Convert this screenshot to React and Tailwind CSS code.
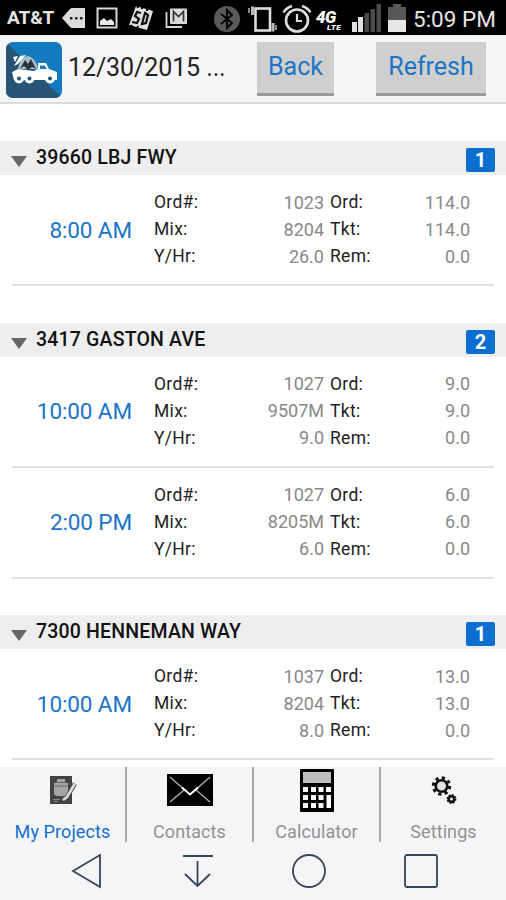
import React from 'react';

const projects = [
  {
    name: '39660 LBJ FWY',
    orders: [
      { time: '8:00 AM', order: '1023', mix: '8204', rate: '26.0', ordered: '114.0', ticketed: '114.0', remaining: '0.0' },
    ],
  },
  {
    name: '3417 GASTON AVE',
    orders: [
      { time: '10:00 AM', order: '1027', mix: '9507M', rate: '9.0', ordered: '9.0', ticketed: '9.0', remaining: '0.0' },
      { time: '2:00 PM', order: '1027', mix: '8205M', rate: '6.0', ordered: '6.0', ticketed: '6.0', remaining: '0.0' },
    ],
  },
  {
    name: '7300 HENNEMAN WAY',
    orders: [
      { time: '10:00 AM', order: '1037', mix: '8204', rate: '8.0', ordered: '13.0', ticketed: '13.0', remaining: '0.0' },
    ],
  },
];

const StatusBar = () => (
  <div className="flex h-[35px] shrink-0 items-center bg-black text-[#e4e4e4]">
    <span className="ml-[7px] mt-[2px] w-[47px] whitespace-nowrap text-[19px] font-bold tracking-[-0.1px]">AT&amp;T</span>
    <svg className="ml-[7px] shrink-0" width="25" height="22" viewBox="0 0 25 22">
      <path d="M1 11 9 2Q10 1 11 1H24V21H11Q10 21 9 20Z" fill="#dcdcdc" />
      <path d="M9 10h2.500v2.500H9zM14 10h2.500v2.500h-2.500zM19 10h2.500v2.500h-2.500z" fill="#222" />
    </svg>
    <svg className="ml-[10px] shrink-0" width="22" height="22" viewBox="0 0 22 22">
      <rect x="1.500" y="1.500" width="19" height="19" fill="none" stroke="#d8d8d8" strokeWidth="2" />
      <path d="M4 18v-4l4-3 3 3 4-2 3 3v3Z" fill="#e8e8e8" />
    </svg>
    <svg className="ml-[10px] shrink-0" width="26" height="26" viewBox="0 0 26 26">
      <path d="M8 1 25 6 19 25 1 20Z" fill="#e0e0e0" />
      <path d="M13 8 9 7 7 11 11 14 9 18 4 17" fill="none" stroke="#111" strokeWidth="2.200" />
      <path d="M17 8 20 10 18 18 14 19Z" fill="none" stroke="#111" strokeWidth="2.200" />
      <path d="M9 0 10 3M14 1 14 4M19 3 19 6M3 20 5 23M10 21 9 24" stroke="#000" strokeWidth="2" />
    </svg>
    <svg className="ml-[11px] shrink-0" width="23" height="22" viewBox="0 0 23 22">
      <path d="M1.500 5V20H17" fill="none" stroke="#d8d8d8" strokeWidth="1.800" />
      <rect x="5" y="1.500" width="17" height="15.500" rx="1" fill="#dcdcdc" />
      <path d="M8.500 14.500V4.500L13.500 9.500 18.500 4.500V14.500" fill="none" stroke="#333" strokeWidth="1.700" />
    </svg>
    <svg className="ml-[25px] mt-[2px] shrink-0" width="28" height="28" viewBox="0 0 28 28">
      <circle cx="14" cy="14" r="13" fill="#5a5a5a" />
      <path d="M8 9 19 18 14 23V5L19 10 8 19" fill="none" stroke="#050505" strokeWidth="2" />
    </svg>
    <svg className="ml-[6px] mt-[2px] shrink-0" width="32" height="28" viewBox="0 0 32 28">
      <rect x="8.500" y="3.500" width="14.500" height="22" fill="none" stroke="#ddd" strokeWidth="2.600" />
      <path d="M5.500 1.500V10M26 18V26.500" stroke="#bbb" strokeWidth="3" />
      <path d="M2 3V8M29 20V25" stroke="#8a8a8a" strokeWidth="2" />
    </svg>
    <svg className="ml-[3px] shrink-0" width="30" height="30" viewBox="0 0 30 30">
      <circle cx="15" cy="17.500" r="11" fill="none" stroke="#ddd" strokeWidth="2.600" />
      <path d="M1.500 9.500Q4 5 10 3M20 3Q26 5 28.500 9.500" fill="none" stroke="#ddd" strokeWidth="2.400" />
      <path d="M15 11V18H20" fill="none" stroke="#ddd" strokeWidth="2.200" />
    </svg>
    <div className="ml-[4px] mt-[8px] flex w-[28px] shrink-0 flex-col italic text-white">
      <span className="text-[17px] font-black leading-[13px] tracking-[-0.5px]">4G</span>
      <span className="ml-[11px] text-[8px] font-black leading-[8px] tracking-[0.5px]">LTE</span>
    </div>
    <svg className="ml-[8px] shrink-0" width="30" height="28" viewBox="0 0 30 28">
      <path d="M0 18h5v10H0zM6 13h5v15H6z" fill="#e0e0e0" />
      <path d="M12.500 9h4.500v19h-4.500zM18.500 5h4.500v23h-4.500zM24.500 0h4.500v28h-4.500z" fill="#4a4a4a" />
    </svg>
    <svg className="ml-[6px] shrink-0" width="18" height="28" viewBox="0 0 18 28">
      <path d="M0 3h5V0h8V3h5V16H0Z" fill="#585858" />
      <path d="M0 16h18v12H0Z" fill="#e6e6e6" />
    </svg>
    <span className="ml-[7px] mt-[4px] whitespace-nowrap text-[22.500px]">5:09 PM</span>
  </div>
);

const AppIcon = () => (
  <svg className="shrink-0" width="56" height="56" viewBox="0 0 56 56">
    <defs>
      <clipPath id="tile">
        <rect width="56" height="56" rx="7" />
      </clipPath>
    </defs>
    <g clipPath="url(#tile)">
      <rect width="56" height="56" fill="#1579bd" />
      <path d="M0 0 56 56H0Z" fill="#275475" />
      <path d="M12 27Q14 15 22 14Q30 16 32 27Z" fill="#a9bfcc" />
      <path d="M14 27 19 18 22 22 25 17 30 27 26 25 22 28 18 24Z" fill="#27323a" />
      <path d="M7 15 12 14 9 20ZM14 14 20 13 12 22 8 24Z" fill="#fff" />
      <path d="M6 30 12 27 28 29 32 27V21H40L43 27 51 30V38H8Z" fill="#fff" />
      <path d="M34 23.500H38.500L41 27H34Z" fill="#1579bd" />
      <g fill="#fff">
        <circle cx="13" cy="36.500" r="5" />
        <circle cx="23.500" cy="36.500" r="5" />
        <circle cx="44" cy="36.500" r="5" />
      </g>
      <g fill="#275475">
        <circle cx="13" cy="36.500" r="2" />
        <circle cx="23.500" cy="36.500" r="2" />
        <circle cx="44" cy="36.500" r="2" />
      </g>
    </g>
  </svg>
);

const Header = () => (
  <header className="flex h-[69px] shrink-0 items-start border-b-2 border-[#dcdcdc] bg-[#f5f5f7] pl-[6px] pt-[7px]">
    <AppIcon />
    <h1 className="ml-[6px] w-[189px] whitespace-nowrap pt-[9px] text-[25px] leading-[34px] tracking-[-0.1px] text-[#222]">12/30/2015 ...</h1>
    <button className="h-[54px] w-[77px] border-b-[3px] border-[#999] bg-[#cfcfcf] pb-[1px] text-[25px] text-[#1b75c4]">Back</button>
    <button className="ml-[42px] h-[54px] w-[110px] border-b-[3px] border-[#999] bg-[#cfcfcf] pb-[1px] text-[25px] text-[#1b75c4]">Refresh</button>
  </header>
);

const OrderRow = ({ order }) => (
  <div className="mx-[12px] flex h-[111px] items-center border-b-2 border-[#e0e3e5] pb-[1px]">
    <div className="w-[120px] pt-[3px] text-right text-[22.500px] tracking-[-0.1px] text-[#1b74c8]">{order.time}</div>
    <div className="ml-[22px] w-[76px] pt-[1px] text-[17.500px] leading-[27px] tracking-[0.3px] text-[#222]">
      <div>Ord#:</div>
      <div>Mix:</div>
      <div>Y/Hr:</div>
    </div>
    <div className="w-[94px] text-right text-[18px] leading-[27px] text-[#888]">
      <div>{order.order}</div>
      <div>{order.mix}</div>
      <div>{order.rate}</div>
    </div>
    <div className="ml-[6px] w-[60px] pt-[1px] text-[17.500px] leading-[27px] tracking-[0.3px] text-[#222]">
      <div>Ord:</div>
      <div>Tkt:</div>
      <div>Rem:</div>
    </div>
    <div className="w-[80px] text-right text-[18px] leading-[27px] text-[#888]">
      <div>{order.ordered}</div>
      <div>{order.ticketed}</div>
      <div>{order.remaining}</div>
    </div>
  </div>
);

const ProjectSection = ({ project }) => (
  <section>
    <div className="flex h-[34px] items-center bg-[#eee] pl-[11px] pr-[11px]">
      <svg className="mt-[7px]" width="16" height="11" viewBox="0 0 16 11">
        <path d="M0 0H16L8 11Z" fill="#666" />
      </svg>
      <h2 className="ml-[9px] flex-1 text-[19.500px] font-medium leading-[32px] tracking-[0.180px] text-[#111]">{project.name}</h2>
      <span className="mt-[4px] flex h-[24px] w-[29px] items-center justify-center rounded-[2px] bg-[#0b6fd0] text-[20px] font-bold text-white">
        {project.orders.length}
      </span>
    </div>
    {project.orders.map((order, i) => (
      <OrderRow key={i} order={order} />
    ))}
  </section>
);

const ProjectsIcon = () => (
  <svg width="28" height="30" viewBox="0 0 28 30">
    <rect x="1" y="1" width="22" height="28" fill="#444" />
    <path d="M8 4H16V8H19V19L17 21H7L5 19V8H8Z" fill="#a5a5a5" />
    <path d="M7 7.500H17M5 11H19" stroke="#666" strokeWidth="1.200" />
    <path d="M4 24.500H11M5 26.500H9" stroke="#888" strokeWidth="1.200" />
    <path d="M26 8.500 18 22 14 25" fill="none" stroke="#555" strokeWidth="4.500" />
    <path d="M26 8.500 18 22 14 25" fill="none" stroke="#e0e0e0" strokeWidth="2.500" />
  </svg>
);

const ContactsIcon = () => (
  <svg width="46" height="32" viewBox="0 0 46 32">
    <rect width="46" height="32" fill="#000" />
    <path d="M3 3 20 18M43 3 26 18M3 28 17 16M43 28 29 16" fill="none" stroke="#aaa" strokeWidth="1.500" />
    <path d="M15 13.500 23 20.500 31 13.500" fill="none" stroke="#fff" strokeWidth="2" />
  </svg>
);

const CalculatorIcon = () => (
  <svg width="34" height="43" viewBox="0 0 34 43">
    <rect width="34" height="43" rx="1" fill="#000" />
    <rect x="3" y="3" width="28" height="11" fill="#bdbdbd" />
    <path d="M3 18h5v5H3zM11 18h5v5h-5zM18.500 18h5v5h-5zM26 18h5v5h-5zM3 26h5v5H3zM11 26h5v5h-5zM18.500 26h5v5h-5zM3 34h5v5H3zM11 34h5v5h-5zM18.500 34h5v5h-5zM26.500 26h4.500v13h-4.500z" fill="#fff" />
  </svg>
);

const SettingsIcon = () => (
  <svg width="26" height="30" viewBox="0 0 26 30">
    <circle cx="10.500" cy="11" r="8.200" fill="none" stroke="#111" strokeWidth="3" strokeDasharray="3.220 3.220" />
    <circle cx="10.500" cy="11" r="5.800" fill="#e4e4e4" stroke="#111" strokeWidth="2.600" />
    <circle cx="20.500" cy="24" r="4.300" fill="none" stroke="#111" strokeWidth="1.400" strokeDasharray="1.700 1.670" />
    <circle cx="20.500" cy="24" r="2.900" fill="#e4e4e4" stroke="#111" strokeWidth="2.600" />
  </svg>
);

const tabs = [
  { label: 'My Projects', icon: <ProjectsIcon />, active: true },
  { label: 'Contacts', icon: <ContactsIcon /> },
  { label: 'Calculator', icon: <CalculatorIcon /> },
  { label: 'Settings', icon: <SettingsIcon /> },
];

const TabBar = () => (
  <nav className="flex h-[75px] shrink-0">
    {tabs.map((tab) => (
      <a
        key={tab.label}
        className={`flex flex-1 flex-col items-center border-r-2 border-[#aaa] last:border-r-0 ${tab.active ? 'text-[#1670d0]' : 'text-[#929292]'}`}
      >
        <div className="flex h-[46px] shrink-0 items-center">{tab.icon}</div>
        <span className="pt-[5px] text-[18px] leading-[28px] tracking-[0.1px]">{tab.label}</span>
      </a>
    ))}
  </nav>
);

const NavBar = () => (
  <div className="flex h-[58px] shrink-0 items-start pl-[71px] pt-[11px]">
    <svg width="31" height="36" viewBox="0 0 31 36" fill="none" stroke="#33475a" strokeWidth="1.800">
      <path d="M29 2V34L2 18Z" />
    </svg>
    <svg className="ml-[80px]" width="32" height="36" viewBox="0 0 32 36" fill="none" stroke="#33475a" strokeWidth="1.800">
      <path d="M1 3H31M15.500 8V33M3 21 15.500 33 28 21" />
    </svg>
    <svg className="ml-[77px]" width="36" height="36" viewBox="0 0 36 36" fill="none" stroke="#33475a" strokeWidth="1.800">
      <circle cx="18" cy="18" r="16" />
    </svg>
    <svg className="ml-[76px]" width="36" height="36" viewBox="0 0 36 36" fill="none" stroke="#33475a" strokeWidth="1.800">
      <rect x="2" y="2" width="32" height="32" rx="2" />
    </svg>
  </div>
);

const App = () => {
  return (
    <div className="flex h-[900px] w-[506px] flex-col overflow-hidden bg-white font-['Roboto',sans-serif]">
      <StatusBar />
      <Header />
      <main className="flex flex-1 flex-col gap-[36.500px] pt-[37px]">
        {projects.map((project) => (
          <ProjectSection key={project.name} project={project} />
        ))}
      </main>
      <footer className="shrink-0 bg-[#f5f5f7]">
        <TabBar />
        <NavBar />
      </footer>
    </div>
  );
};

export default App;
